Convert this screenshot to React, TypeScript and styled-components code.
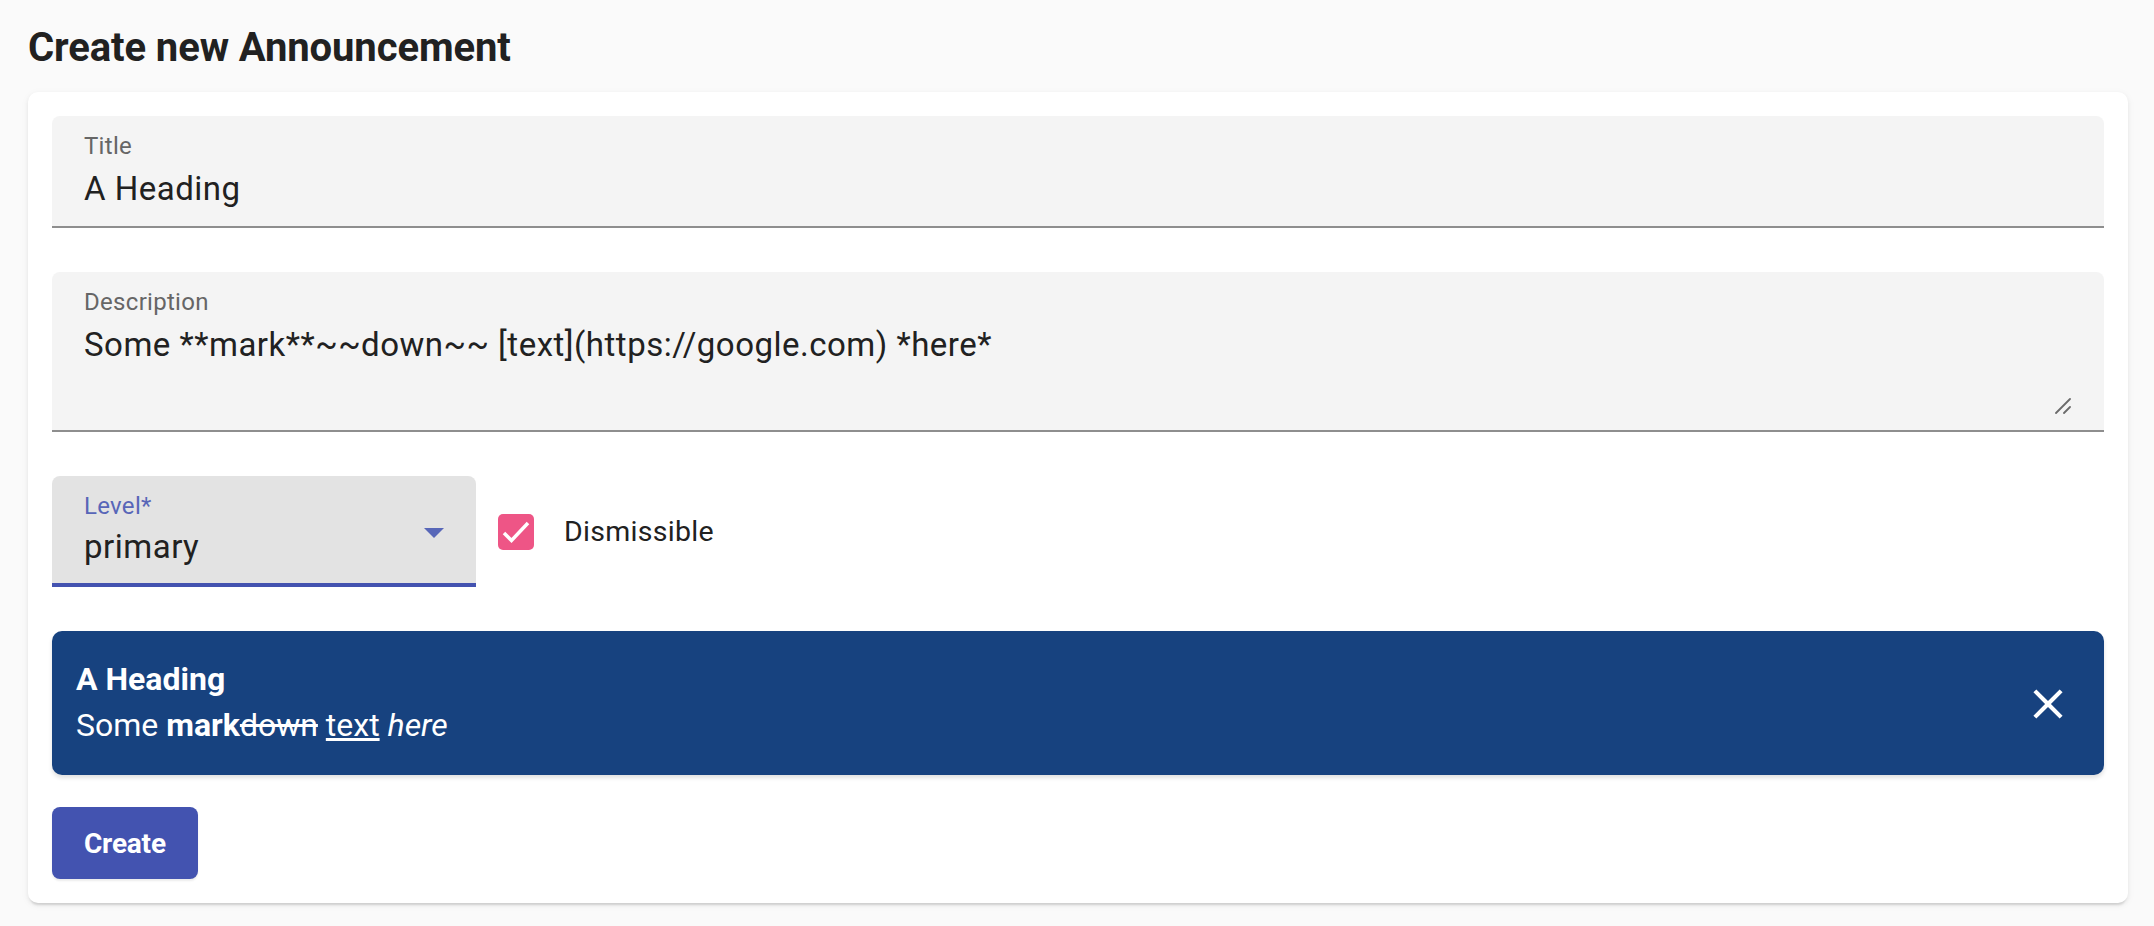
import React from "react";
import styled, { createGlobalStyle } from "styled-components";

const GlobalStyle = createGlobalStyle`
  html, body {
    margin: 0;
    padding: 0;
    background: #fafafa;
    font-family: Roboto, "Liberation Sans", Arial, sans-serif;
    color: rgba(0, 0, 0, 0.87);
  }
  * { box-sizing: border-box; }
`;

const Page = styled.main`
  padding: 24px 26px 22px 28px;
  display: flex;
  flex-direction: column;
`;

const Heading = styled.h1`
  margin: 0 0 20px;
  font-size: 40px;
  line-height: 48px;
  font-weight: 700;
  letter-spacing: -0.1px;
  color: #212121;
`;

const Card = styled.section`
  background: #ffffff;
  border-radius: 10px;
  padding: 24px;
  box-shadow: 0 4px 2px -2px rgba(0, 0, 0, 0.1), 0 2px 4px 0 rgba(0, 0, 0, 0.06),
    0 2px 8px 0 rgba(0, 0, 0, 0.05);
  display: flex;
  flex-direction: column;
`;

const Field = styled.div<{ $focused?: boolean; $width?: string; $gap?: number }>`
  background: ${(p) => (p.$focused ? "#e3e3e3" : "#f4f4f4")};
  border-radius: 8px 8px 0 0;
  border-bottom: ${(p) => (p.$focused ? "4px solid #4352b0" : "2px solid #8e8e8e")};
  padding: 18px 32px ${(p) => (p.$focused ? "17px" : "18px")};
  width: ${(p) => p.$width ?? "auto"};
  display: flex;
  flex-direction: column;
  position: relative;
  margin-bottom: ${(p) => p.$gap ?? 44}px;
`;

const Label = styled.label<{ $focused?: boolean }>`
  font-size: 24px;
  line-height: 24px;
  letter-spacing: 0.3px;
  color: ${(p) => (p.$focused ? "#5866b8" : "#666666")};
  margin-bottom: ${(p) => (p.$focused ? "10px" : "12px")};
`;

const TextInput = styled.input`
  border: 0;
  outline: none;
  background: transparent;
  padding: 0;
  margin: 0;
  font-family: inherit;
  font-size: 33px;
  line-height: 38px;
  height: 38px;
  letter-spacing: 0.5px;
  color: #212121;
  width: 100%;
`;

const TextArea = styled.textarea`
  border: 0;
  outline: none;
  background: transparent;
  padding: 0;
  margin: 0;
  font-family: inherit;
  font-size: 33px;
  line-height: 38px;
  height: 90px;
  letter-spacing: 0.5px;
  color: #212121;
  width: 100%;
  resize: none;
  margin-bottom: -4px;
`;

const ResizeGrip = styled.svg`
  position: absolute;
  right: 33px;
  bottom: 16px;
  width: 16px;
  height: 16px;
`;

const SelectValue = styled.div`
  font-size: 33px;
  line-height: 38px;
  letter-spacing: 0.5px;
  color: #212121;
`;

const Caret = styled.svg`
  position: absolute;
  right: 32px;
  top: 52px;
  width: 20px;
  height: 10px;
`;

const Row = styled.div`
  display: flex;
  align-items: center;
  margin-bottom: 44px;
`;

const CheckLabel = styled.label`
  display: flex;
  align-items: center;
  gap: 30px;
  margin-left: 22px;
  font-size: 28.5px;
  letter-spacing: 0.3px;
  color: #212121;
`;

const CheckBox = styled.span`
  width: 36px;
  height: 36px;
  border-radius: 5px;
  background: #ee5586;
  display: flex;
  align-items: center;
  justify-content: center;
`;

const Alert = styled.div`
  background: #17427f;
  color: #ffffff;
  border-radius: 10px;
  padding: 24px 31px 27px 24px;
  display: flex;
  align-items: center;
  box-shadow: 0 3px 4px rgba(0, 0, 0, 0.12);
  margin-bottom: 32px;
`;

const AlertBody = styled.div`
  flex: 1;
  display: flex;
  flex-direction: column;
`;

const AlertTitle = styled.div`
  font-size: 32px;
  line-height: 48px;
  font-weight: 700;
`;

const AlertMessage = styled.div`
  font-size: 32px;
  line-height: 45px;
  strong { font-weight: 700; }
  del { text-decoration: line-through; }
  a { color: inherit; text-decoration: underline; }
  em { font-style: italic; }
`;

const CloseIcon = styled.svg`
  width: 50px;
  height: 50px;
  fill: #ffffff;
  margin-top: 4px;
`;

const Button = styled.button`
  align-self: flex-start;
  background: #4353b0;
  color: #ffffff;
  border: 0;
  border-radius: 8px;
  height: 72px;
  padding: 0 32px;
  font-family: inherit;
  font-size: 28px;
  font-weight: 700;
  letter-spacing: -0.2px;
  box-shadow: 0 2px 2px rgba(0, 0, 0, 0.08);
`;

export default function App() {
  return (
    <>
      <GlobalStyle />
      <Page>
        <Heading>Create new Announcement</Heading>
        <Card>
          <Field>
            <Label htmlFor="title">Title</Label>
            <TextInput id="title" defaultValue="A Heading" readOnly />
          </Field>
          <Field>
            <Label htmlFor="desc">Description</Label>
            <TextArea
              id="desc"
              defaultValue="Some **mark**~~down~~ [text](https://google.com) *here*"
              readOnly
            />
            <ResizeGrip viewBox="0 0 16 16">
              <path d="M15 1 L1 15 M15 9 L9 15" stroke="#6b6b6b" strokeWidth="1.8" strokeLinecap="round" fill="none" />
            </ResizeGrip>
          </Field>
          <Row>
            <Field $focused $width="424px" $gap={0}>
              <Label $focused>Level*</Label>
              <SelectValue>primary</SelectValue>
              <Caret viewBox="0 0 20 10">
                <path d="M0 0 L20 0 L10 10 Z" fill="#5867b8" />
              </Caret>
            </Field>
            <CheckLabel>
              <CheckBox>
                <svg width="36" height="36" viewBox="0 0 36 36">
                  <path d="M6 19 L13.5 26.5 L30 9" stroke="#fff" strokeWidth="3.5" fill="none" />
                </svg>
              </CheckBox>
              Dismissible
            </CheckLabel>
          </Row>
          <Alert>
            <AlertBody>
              <AlertTitle>A Heading</AlertTitle>
              <AlertMessage>
                Some <strong>mark</strong>
                <del>down</del> <a href="#">text</a> <em>here</em>
              </AlertMessage>
            </AlertBody>
            <CloseIcon viewBox="0 0 24 24">
              <path d="M19 6.41L17.59 5 12 10.59 6.41 5 5 6.41 10.59 12 5 17.59 6.41 19 12 13.41 17.59 19 19 17.59 13.41 12z" />
            </CloseIcon>
          </Alert>
          <Button>Create</Button>
        </Card>
      </Page>
    </>
  );
}
